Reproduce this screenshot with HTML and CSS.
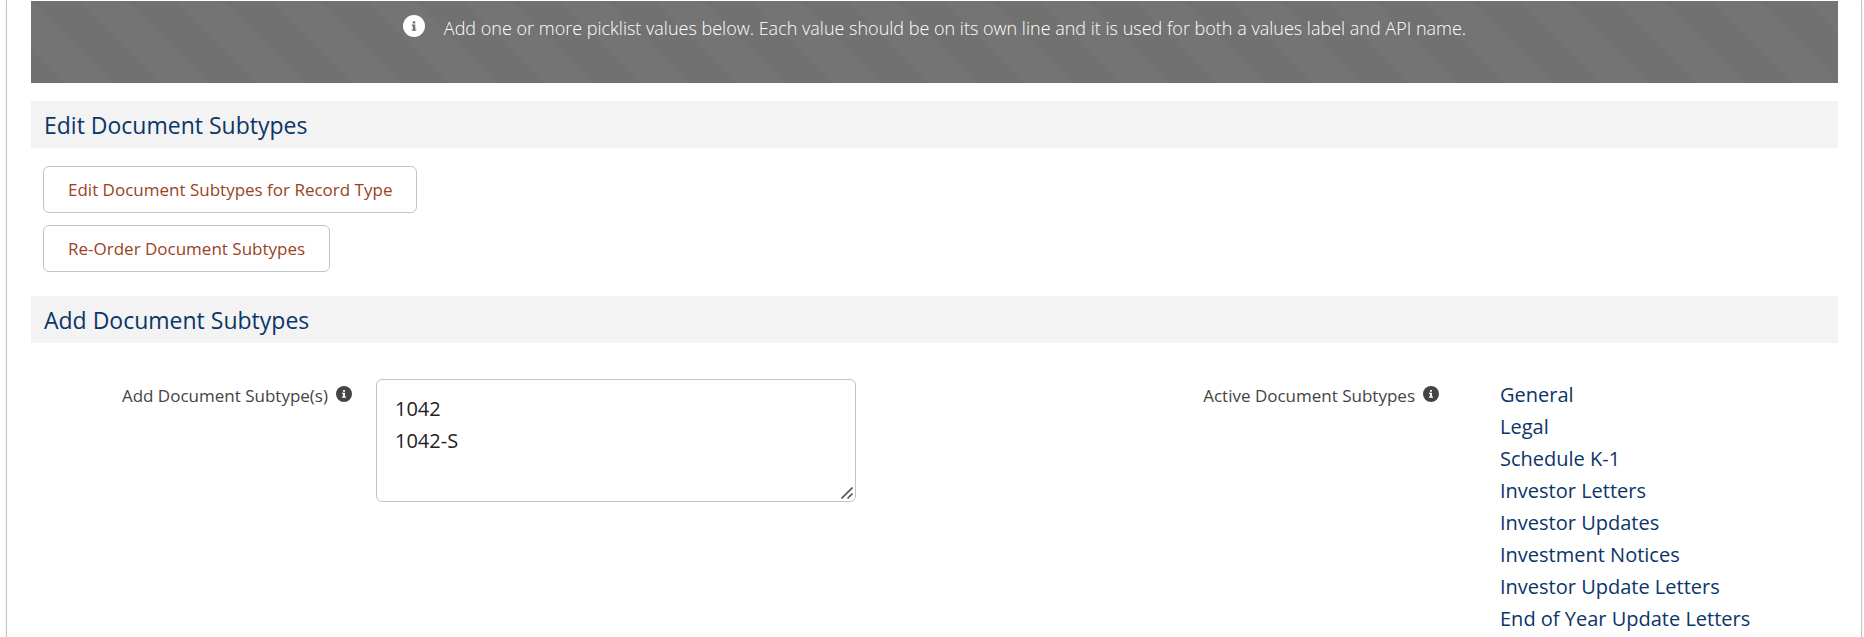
FILE: index.html
```html
<!DOCTYPE html>
<html lang="en">
<head>
  <meta charset="UTF-8">
  <meta name="viewport" content="width=device-width, initial-scale=1.0">
  <title>Document Subtypes</title>
  <link rel="stylesheet" href="styles.css">
</head>
<body>
  <main class="panel">
    <div class="banner" role="status">
      <svg class="banner-icon" viewBox="0 0 22 22" aria-hidden="true">
        <circle cx="11" cy="11" r="11" fill="#fff" />
        <path d="M9.8 6.2h2.4v2.2H9.8zM8.8 9.6h3.5v4.9h1v1.3H8.8v-1.3h1v-3.6h-1z" fill="#717171" />
      </svg>
      <p>Add one or more picklist values below. Each value should be on its own line and it is used for both a values label and API name.</p>
    </div>

    <section>
      <h2>Edit Document Subtypes</h2>
      <div class="actions">
        <button type="button">Edit Document Subtypes for Record Type</button>
        <button type="button">Re-Order Document Subtypes</button>
      </div>
    </section>

    <section>
      <h2>Add Document Subtypes</h2>
      <div class="fields">
        <div class="field-label">
          <label for="subtypes">Add Document Subtype(s)</label>
          <svg class="info-icon" viewBox="0 0 22 22" aria-hidden="true">
            <circle cx="11" cy="11" r="11" fill="#444" />
            <path d="M9.7 5.4h2.6v2.6H9.7zM8.2 9.4h4.1v5.2h1.5v1.6H8.2v-1.6h1.5V11H8.2z" fill="#fff" />
          </svg>
        </div>
        <div class="textarea-wrap">
          <textarea id="subtypes" rows="3" spellcheck="false">1042
1042-S</textarea>
          <svg class="grip" viewBox="0 0 12 12" aria-hidden="true">
            <path d="M0.5 11.5 11.5 0.5M6.5 11.5 11.5 6.5" stroke="#555" stroke-width="1.6" fill="none" />
          </svg>
        </div>
        <div class="field-label active-label">
          <span id="activeLabel">Active Document Subtypes</span>
          <svg class="info-icon" viewBox="0 0 22 22" aria-hidden="true">
            <circle cx="11" cy="11" r="11" fill="#444" />
            <path d="M9.7 5.4h2.6v2.6H9.7zM8.2 9.4h4.1v5.2h1.5v1.6H8.2v-1.6h1.5V11H8.2z" fill="#fff" />
          </svg>
        </div>
        <ul class="subtype-list" aria-labelledby="activeLabel">
          <li><a href="#">General</a></li>
          <li><a href="#">Legal</a></li>
          <li><a href="#">Schedule K-1</a></li>
          <li><a href="#">Investor Letters</a></li>
          <li><a href="#">Investor Updates</a></li>
          <li><a href="#">Investment Notices</a></li>
          <li><a href="#">Investor Update Letters</a></li>
          <li><a href="#">End of Year Update Letters</a></li>
        </ul>
      </div>
    </section>
  </main>
</body>
</html>
```
FILE: styles.css
```css
* {
  box-sizing: border-box;
}
body {
  margin: 0;
  padding: 0 2px 0 6px;
  font-family: "Segoe UI", "Open Sans", "Noto Sans", sans-serif;
  background-color: #fff;
  color: #444;
}
.panel {
  min-height: 100vh;
  padding: 1px 23px 0 24px;
  border: 1px solid #c4c4c4;
  border-width: 0 1px;
  box-shadow: 0 2px 2px rgba(0, 0, 0, 0.1);
  background-color: #fff;
}

/* Striped notice */
.banner {
  display: flex;
  justify-content: center;
  gap: 19px;
  min-height: 82px;
  padding: 11px 24px;
  color: #fff;
  background-color: #747474;
  background-image: linear-gradient(45deg, rgba(0, 0, 0, 0.025) 25%, transparent 25%, transparent 50%, rgba(0, 0, 0, 0.025) 50%, rgba(0, 0, 0, 0.025) 75%, transparent 75%);
  background-size: 96px 96px;
}
.banner p {
  margin: 0;
  font-size: 18px;
  font-weight: 300;
  line-height: 32px;
}
.banner-icon {
  flex: none;
  width: 22px;
  height: 22px;
  margin-top: 3px;
}

h2 {
  margin: 18px 0;
  padding: 1px 13px 0;
  font-size: 23px;
  font-weight: 400;
  line-height: 46px;
  color: #0c3568;
  background-color: #f3f3f3;
}
.actions {
  display: flex;
  flex-direction: column;
  align-items: flex-start;
  gap: 12px;
  margin-bottom: 24px;
  padding: 0 12px;
}
button {
  padding: 0 24px;
  border: 1px solid #c4c4c4;
  border-radius: 6px;
  background-color: #fff;
  color: #99431f;
  font-family: inherit;
  font-size: 17px;
  line-height: 45px;
  cursor: pointer;
}
button:hover {
  background-color: #f4f6f9;
}

.fields {
  display: grid;
  grid-template-columns: 321fr 480fr 596fr 338fr;
  column-gap: 24px;
  align-items: start;
  padding-top: 18px;
}
.field-label {
  display: flex;
  justify-content: flex-end;
  gap: 8px;
  padding-top: 1px;
  font-size: 17px;
  line-height: 32px;
}
.active-label {
  padding-right: 37px;
}
.info-icon {
  flex: none;
  width: 16px;
  height: 16px;
  margin-top: 6px;
}
.textarea-wrap {
  position: relative;
}
textarea {
  display: block;
  width: 100%;
  padding: 13px 18px 12px;
  border: 1px solid #c4c4c4;
  border-radius: 6px;
  background-color: #fff;
  color: #222;
  font-family: inherit;
  font-size: 20px;
  line-height: 32px;
  outline: none;
  resize: vertical;
}
textarea::-webkit-resizer {
  display: none;
}
.grip {
  position: absolute;
  right: 3px;
  bottom: 3px;
  width: 12px;
  height: 12px;
  pointer-events: none;
}
.subtype-list {
  margin: 0;
  padding: 0;
  list-style: none;
  font-size: 20px;
  line-height: 32px;
}
.subtype-list a {
  color: #0c3568;
  text-decoration: none;
}
.subtype-list a:hover {
  text-decoration: underline;
}
```
